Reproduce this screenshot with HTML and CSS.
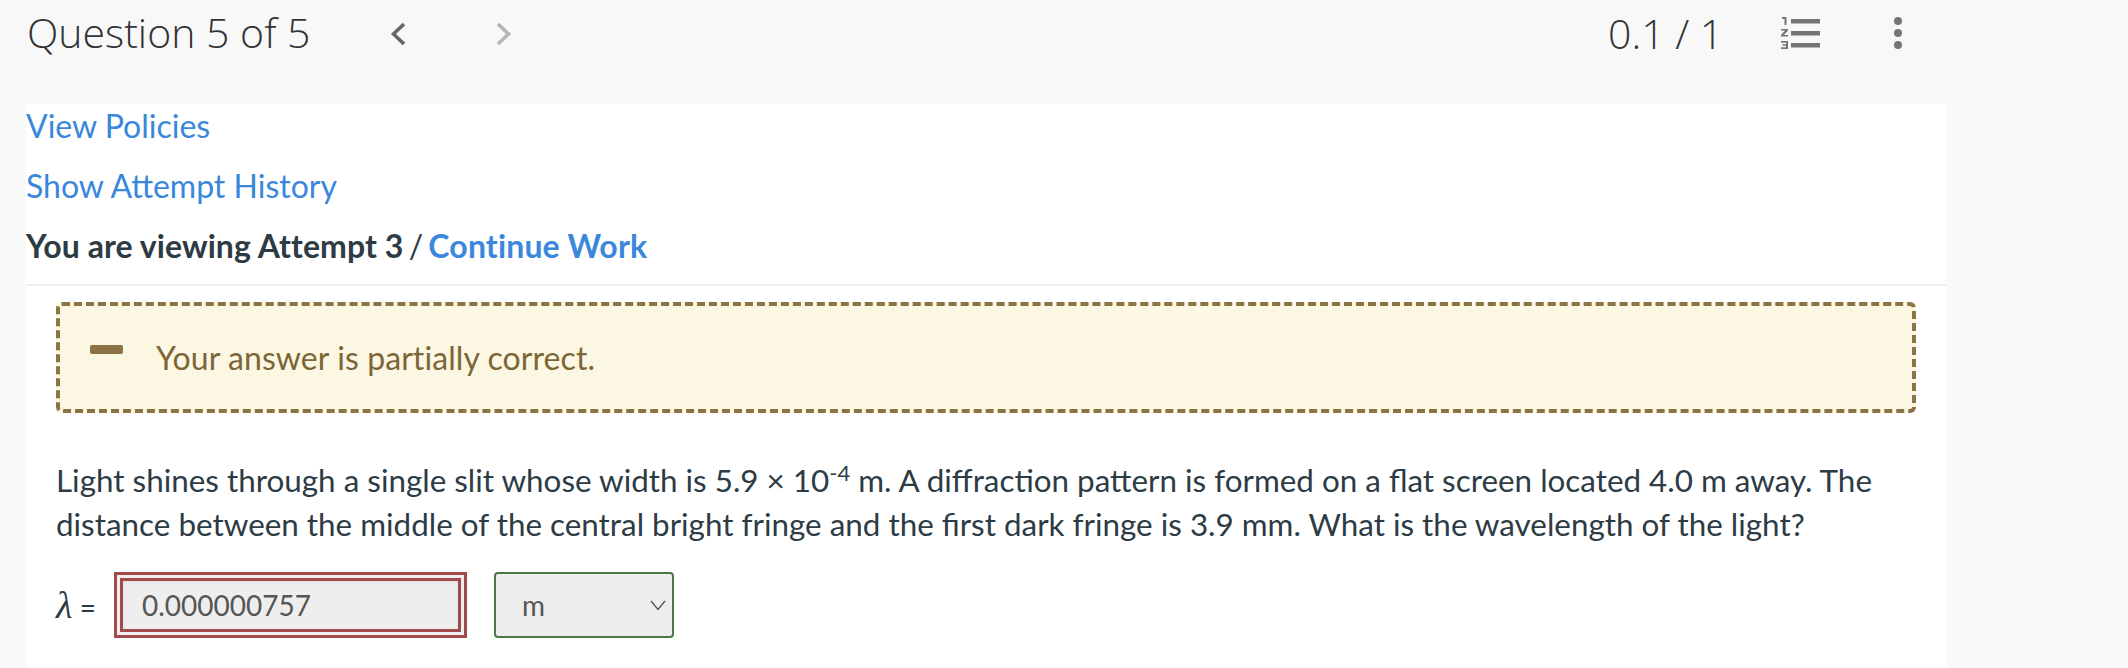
FILE: index.html
```html
<!DOCTYPE html>
<html lang="en">
<head>
<meta charset="utf-8">
<title>Question 5 of 5</title>
<link rel="stylesheet" href="styles.css">
</head>
<body>
<header class="topbar">
  <h1 class="title">Question 5 of 5</h1>
  <svg class="chev" width="18" height="26" viewBox="0 0 18 26"><path d="M15 3 L4.500 13 L15 23" fill="none" stroke="#666" stroke-width="3.6"/></svg>
  <svg class="chev next" width="18" height="26" viewBox="0 0 18 26"><path d="M3 3 L13.500 13 L3 23" fill="none" stroke="#b5b5b5" stroke-width="3.6"/></svg>
  <span class="score">0.1 / 1</span>
  <svg class="list-icon" width="39" height="32" viewBox="0 0 39 32" fill="#757575">
    <path d="M1 0h4.500v8H3.500V2H1z"/>
    <path d="M0 12h7v1.600L3 18h4v1.600H0V18l4-4.400H0z"/>
    <path d="M0 24h7v8H0v-1.700h5v-1.500H1.500v-1.500H5v-1.600H0z"/>
    <rect x="10" y="2" width="29" height="4.500"/>
    <rect x="10" y="14" width="29" height="4.500"/>
    <rect x="10" y="26" width="29" height="4.500"/>
  </svg>
  <svg class="dots" width="8" height="32" viewBox="0 0 8 32" fill="#757575"><circle cx="4" cy="4" r="4"/><circle cx="4" cy="16" r="4"/><circle cx="4" cy="28" r="4"/></svg>
</header>
<main class="content">
  <div class="links">
    <a class="link" href="#">View Policies</a>
    <a class="link" href="#">Show Attempt History</a>
    <p class="attempt"><strong>You are viewing Attempt 3</strong> <span class="sep">/</span> <a class="link strong" href="#">Continue Work</a></p>
  </div>
  <section class="question">
    <div class="alert">
      <span class="dash"></span>
      <span class="alert-text">Your answer is partially correct.</span>
    </div>
    <p class="prompt">Light shines through a single slit whose width is 5.9 × 10<sup>-4</sup> m. A diffraction pattern is formed on a flat screen located 4.0 m away. The distance between the middle of the central bright fringe and the first dark fringe is 3.9 mm. What is the wavelength of the light?</p>
    <div class="answer">
      <span class="label"><i class="lambda">λ</i> =</span>
      <span class="input">0.000000757</span>
      <span class="select">m
        <svg class="caret" width="16" height="11" viewBox="0 0 16 11"><path d="M1 1 L8 9.500 L15 1" fill="none" stroke="#555" stroke-width="1.400"/></svg>
      </span>
    </div>
  </section>
</main>
</body>
</html>
```
FILE: styles.css
```css
* { box-sizing: border-box; }
html, body { margin: 0; height: 100%; }
body {
  background: #f9f9f9;
  font-family: Lato, "Liberation Sans", sans-serif;
  font-size: 32px;
  color: #2d3b45;
  overflow: hidden;
}
.topbar {
  height: 104px;
  background: #f8f8f8;
  display: flex;
  align-items: flex-start;
  padding: 9px 0 0 27px;
}
.title {
  margin: 0;
  width: 362px;
  font-family: "Open Sans", sans-serif;
  font-weight: 300;
  font-size: 41px;
  line-height: 46px;
  color: #333;
}
.chev { margin-top: 12px; }
.chev.next { margin-left: 88px; }
.score {
  margin-left: 1095px;
  width: 173px;
  padding-top: 1px;
  font-family: "Open Sans", sans-serif;
  font-weight: 300;
  font-size: 41px;
  line-height: 46px;
  color: #333;
}
.list-icon { margin-top: 8px; }
.dots { margin-left: 74px; margin-top: 8px; }
.content {
  width: 1920px;
  margin-left: 26px;
  background: #fff;
  height: 564px;
}
.links {
  height: 182px;
  padding-top: 2px;
  border-bottom: 2px solid #eee;
  display: flex;
  flex-direction: column;
  align-items: flex-start;
  gap: 20px;
  line-height: 40px;
}
.link { color: #3a87dc; text-decoration: none; }
.link.strong { font-weight: 700; letter-spacing: 0.15px; }
.attempt { margin: 0; }
.attempt strong { font-weight: 700; letter-spacing: 0.08px; }
.sep { margin: 0 -3px; }
.question { padding: 16px 30px 0 30px; }
.alert {
  height: 111px;
  border: 4px dashed #8b7344;
  border-radius: 6px;
  background: #fbf7e3;
  color: #7d6636;
  display: flex;
  align-items: center;
  padding: 0 0 0 30px;
  gap: 33px;
}
.alert-text { letter-spacing: 0.08px; }
.dash {
  width: 33px;
  height: 9px;
  margin-top: -16px;
  border-radius: 2px;
  background: #8b7344;
}
.prompt {
  margin: 46px 0 0;
  font-size: 31.4px;
  line-height: 43.5px;
  width: 1840px;
}
.prompt sup { font-size: 22px; line-height: 0; }
.answer {
  margin-top: 26px;
  display: flex;
  align-items: center;
}
.label { width: 58px; font-size: 28px; }
.lambda { font-family: "Liberation Serif", serif; font-size: 38px; }
.input {
  width: 353px;
  height: 66px;
  border: 9px double #a34a4a;
  background: #eee;
  box-shadow: inset 0 1px 2px rgba(0, 0, 0, 0.08);
  color: #555;
  font-size: 28px;
  display: flex;
  align-items: center;
  padding-left: 19px;
}
.select {
  margin-left: 27px;
  width: 180px;
  height: 66px;
  border: 2px solid #4a7a45;
  border-radius: 4px;
  background: #eee;
  color: #555;
  font-size: 28px;
  display: flex;
  align-items: center;
  justify-content: space-between;
  padding: 0 6px 0 26px;
}
```
